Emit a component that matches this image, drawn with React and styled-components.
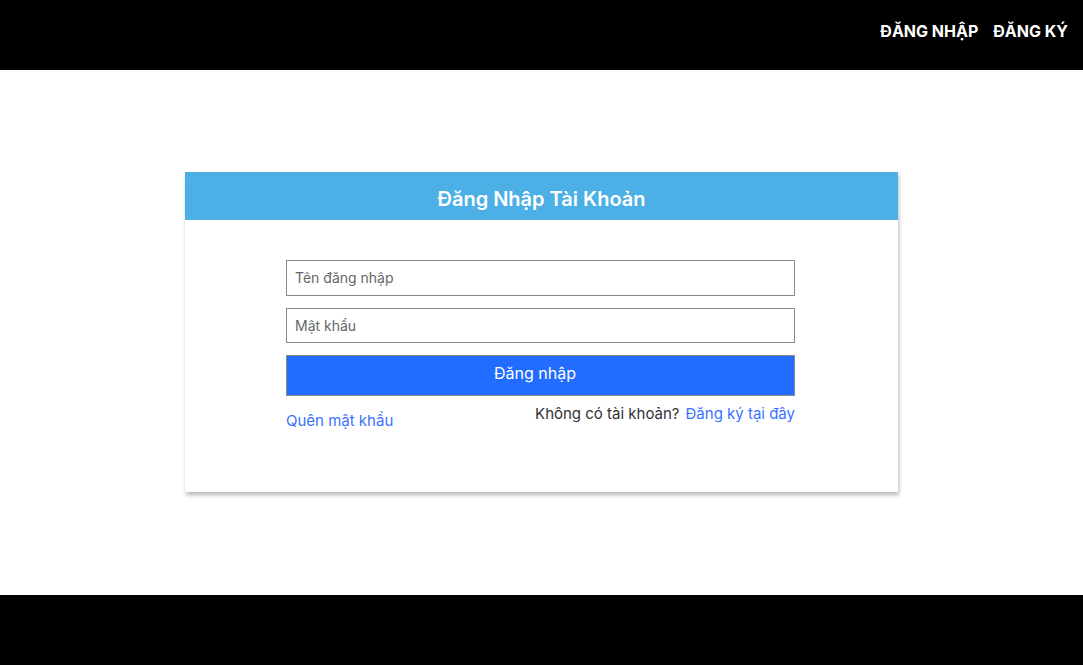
import React from "react";
import styled, { createGlobalStyle } from "styled-components";

const Global = createGlobalStyle`
  html, body { margin: 0; padding: 0; }
  body { font-family: Inter, "Noto Sans", sans-serif; background: #fff; }
  * { box-sizing: border-box; }
`;

const Page = styled.div`
  display: flex;
  flex-direction: column;
  min-height: 665px;
`;

const TopBar = styled.header`
  height: 70px;
  background: #000;
  display: flex;
  align-items: center;
  justify-content: flex-end;
  padding: 0 15px 8px 0;
  gap: 15px;
`;

const NavLink = styled.a`
  color: #fff;
  font-weight: 700;
  font-size: 16px;
  text-decoration: none;
`;

const Main = styled.main`
  flex: 1;
  display: flex;
  align-items: center;
  justify-content: center;
  padding-bottom: 2px;
`;

const Card = styled.section`
  width: 713px;
  height: 320px;
  background: #fff;
  box-shadow: 1px 3px 4px rgba(0, 0, 0, 0.28);
  display: flex;
  flex-direction: column;
`;

const CardHeader = styled.h2`
  margin: 0;
  height: 48px;
  background: #4cafe5;
  color: #fff;
  font-size: 20px;
  font-weight: 600;
  display: flex;
  align-items: center;
  justify-content: center;
  padding-top: 6px;
`;

const Form = styled.form`
  width: 509px;
  margin: 40px auto 0;
  display: flex;
  flex-direction: column;
  gap: 12px;
  position: relative;
  left: -1px;
`;

const Input = styled.input`
  height: ${p => p.$h || 36}px;
  border: 1px solid #8a8a8a;
  padding: 0 8px;
  font-family: Inter, "Noto Sans", sans-serif;
  font-size: 14px;
  color: #333;
  outline: none;
  &::placeholder { color: #666; }
`;

const Button = styled.button`
  height: 41px;
  background: #226cff;
  border: 1px solid #8a8a8a;
  color: #fff;
  font-family: Inter, "Noto Sans", sans-serif;
  font-size: 16px;
  cursor: pointer;
  padding: 0 11px 4px 0;
`;

const Links = styled.div`
  display: flex;
  justify-content: space-between;
  align-items: flex-start;
  margin-top: -4px;
  font-size: 15px;
`;

const Link = styled.a`
  color: #3a72ff;
  text-decoration: none;
  margin-top: ${p => p.$mt || 0}px;
`;

const Muted = styled.span`
  color: #333;
  margin-right: 6px;
`;

const Footer = styled.footer`
  height: 70px;
  background: #000;
`;

export default function App() {
  return (
    <Page>
      <Global />
      <TopBar>
        <NavLink href="#">ĐĂNG NHẬP</NavLink>
        <NavLink href="#">ĐĂNG KÝ</NavLink>
      </TopBar>
      <Main>
        <Card>
          <CardHeader>Đăng Nhập Tài Khoản</CardHeader>
          <Form onSubmit={e => e.preventDefault()}>
            <Input placeholder="Tên đăng nhập" />
            <Input $h={35} type="password" placeholder="Mật khẩu" />
            <Button type="submit">Đăng nhập</Button>
            <Links>
              <Link href="#" $mt={7}>Quên mật khẩu</Link>
              <div>
                <Muted>Không có tài khoản?</Muted>
                <Link href="#">Đăng ký tại đây</Link>
              </div>
            </Links>
          </Form>
        </Card>
      </Main>
      <Footer />
    </Page>
  );
}
